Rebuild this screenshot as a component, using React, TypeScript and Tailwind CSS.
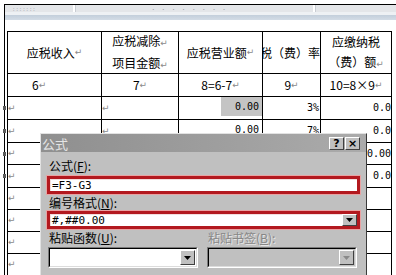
import React from "react";

const cjk = "font-['Noto_Sans_CJK_SC','Noto_Sans',sans-serif]";
const mono = "font-['DejaVu_Sans_Mono','Liberation_Mono',monospace]";

const Ret = () => <span className="text-[9px] text-[#8a8a8a] font-['DejaVu_Sans',sans-serif]">↵</span>;

const heights = [23, 23, 22, 23, 22, 22, 22, 22];

const col3 = ["0.00", "0.00", "", "", "", "", "", ""];
const col4 = ["3%", "7%", "", "", "", "", "", ""];
const col5 = ["0.0", "0.0", "0.00", "0.0", "", "", "", ""];

const Cell: React.FC<{ className?: string; children?: React.ReactNode; h: number }> = ({ className = "", children, h }) => (
  <div className={`border-r border-b border-black flex items-center overflow-hidden ${className}`} style={{ height: h }}>
    {children}
  </div>
);

const DropBtn: React.FC<{ disabled?: boolean }> = ({ disabled }) => (
  <div className="w-[15px] h-full bg-[#c0c0c0] border border-t-white border-l-white border-r-[#404040] border-b-[#404040] flex items-center justify-center">
    <svg width="7" height="4" viewBox="0 0 7 4">
      <path d="M0 0h7L3.5 4z" fill={disabled ? "#8a8a8a" : "#000"} />
    </svg>
  </div>
);

const RedFrame: React.FC<{ text: string; drop?: boolean }> = ({ text, drop }) => (
  <div className="mx-[5px] h-[20px] border border-[#e9a2a2] bg-[#b3191f] p-[3px]">
    <div className="h-full bg-white flex items-center shadow-[inset_1px_1px_0_#f3dede]">
      <span className={`${mono} text-[11px] text-black pl-[2px] flex-1 leading-none`}>{text}</span>
      {drop && <DropBtn />}
    </div>
  </div>
);

const Combo: React.FC<{ disabled?: boolean }> = ({ disabled }) => (
  <div className="w-[150px] h-[21px] border border-t-[#7a7a7a] border-l-[#7a7a7a] border-r-white border-b-white">
    <div className={`h-full border border-t-black border-l-black border-r-[#dcdcdc] border-b-[#dcdcdc] flex justify-end p-[1px] ${disabled ? "bg-[#c0c0c0]" : "bg-white"}`}>
      <DropBtn disabled={disabled} />
    </div>
  </div>
);

const App: React.FC = () => {
  return (
    <div className={`w-[396px] h-[275px] overflow-hidden relative bg-white ${cjk} text-black`}>
      <div className="h-[4px]" />
      <div className="flex">
        <div className="w-[4px]" />
        <div className="flex-1 border-l border-t border-black h-[280px]">
          {/* toolbar strip */}
          <div className="h-[7px] bg-[#e4e6e9] flex items-center">
            <span className="ml-[8px] text-[5px] tracking-[2px] text-[#9aa0a8]">:::::::</span>
            <div className="ml-[36px] w-[3px] h-full bg-white border-r border-[#c8ccd2]" />
            <span className="ml-[75px] text-[5px] tracking-[2px] text-[#9aa0a8]">· · · · · · · ·</span>
            <div className="ml-auto mr-[80px] w-[3px] h-full bg-white border-r border-[#c8ccd2]" />
          </div>
          <div className="h-[3px] bg-[#eef1f4]" />
          <div className="h-[5px] bg-linear-to-b from-[#c3cfdb] to-[#d3dce6]" />
          <div className="h-[11px]" />

          {/* table */}
          <div className="ml-[2px] w-[385px] border-l border-t border-black grid grid-cols-[94px_77px_84px_58px_71px] text-[12px]">
            <Cell h={42} className="justify-center leading-none">应税收入<Ret /></Cell>
            <Cell h={42} className="flex-col justify-center leading-[20px]">
              <div>应税减除<Ret /></div>
              <div>项目金额<Ret /></div>
            </Cell>
            <Cell h={42} className="justify-center leading-none">应税营业额<Ret /></Cell>
            <Cell h={42} className="justify-end whitespace-nowrap leading-none">应税（费）率</Cell>
            <Cell h={42} className="flex-col justify-center leading-[20px] whitespace-nowrap">
              <div>应缴纳税</div>
              <div>（费）额<Ret /></div>
            </Cell>

            <Cell h={23} className="pl-[24px] leading-none">6<Ret /></Cell>
            <Cell h={23} className="justify-center leading-none">7<Ret /></Cell>
            <Cell h={23} className="justify-center leading-none">8=6-7<Ret /></Cell>
            <Cell h={23} className="justify-center leading-none">9<Ret /></Cell>
            <Cell h={23} className="justify-center leading-none whitespace-nowrap">10=8×9<Ret /></Cell>

            {heights.map((h, i) => (
              <React.Fragment key={i}>
                <Cell h={h} className="relative overflow-visible leading-none">
                  {i < 4 && <span className="absolute left-[-5px] w-[3px] h-[4px] bg-[#5a5a5a]" />}
                  <Ret />
                </Cell>
                <Cell h={h} className="leading-none"><Ret /></Cell>
                <Cell h={h} className="justify-end items-start">
                  {col3[i] && (
                    <div className={`w-[41px] h-[19px] flex items-center justify-end pr-[3px] ${i === 0 ? "bg-[#c4c4c4]" : ""}`}>
                      <span className={`${mono} text-[10px] leading-none`}>{col3[i]}</span>
                    </div>
                  )}
                </Cell>
                <Cell h={h} className="justify-end pr-[1px]">
                  <span className={`${mono} text-[10px] leading-none`}>{col4[i]}</span>
                </Cell>
                <Cell h={h} className="justify-end">
                  <span className={`${mono} text-[10px] leading-none`}>{col5[i]}</span>
                </Cell>
              </React.Fragment>
            ))}
          </div>
        </div>
      </div>

      {/* formula dialog */}
      <div className="absolute left-[40px] top-[133px] w-[327px] h-[160px] bg-[#c0c0c0] border border-t-[#e2e2e2] border-l-[#e2e2e2] border-r-[#3a3a3a] border-b-[#3a3a3a]">
        <div className="h-[18px] bg-linear-to-r from-[#8f8f8f] to-[#ababab] flex items-center">
          <span className="pl-[1px] text-[13px] leading-none text-[#e4e4e4]">公式</span>
          <div className="ml-auto mr-[6px] flex gap-[1px]">
            <div className="w-[15px] h-[13px] bg-[#c0c0c0] border border-t-white border-l-white border-r-[#404040] border-b-[#404040] flex items-center justify-center text-[11px] font-bold leading-none font-['DejaVu_Sans',sans-serif]">?</div>
            <div className="w-[15px] h-[13px] bg-[#c0c0c0] border border-t-white border-l-white border-r-[#404040] border-b-[#404040] flex items-center justify-center text-[11px] font-bold leading-none font-['DejaVu_Sans',sans-serif]">×</div>
          </div>
        </div>
        <div className="pt-[7px] text-[12px]">
          <div className="pl-[8px] h-[14px] leading-[14px]">公式(<span className="underline">F</span>):</div>
          <div className="h-[2px]" />
          <RedFrame text="=F3-G3" />
          <div className="pl-[8px] h-[15px] leading-[15px]">编号格式(<span className="underline">N</span>):</div>
          <RedFrame text="#,##0.00" drop />
          <div className="flex h-[16px] leading-[16px]">
            <div className="pl-[8px] w-[167px]">粘贴函数(<span className="underline">U</span>):</div>
            <div className="text-[#878787] [text-shadow:1px_1px_0_#e6e6e6]">粘贴书签(<span className="underline">B</span>):</div>
          </div>
          <div className="flex pl-[7px] gap-[9px] mt-[1px]">
            <Combo />
            <Combo disabled />
          </div>
        </div>
      </div>
    </div>
  );
};

export default App;
